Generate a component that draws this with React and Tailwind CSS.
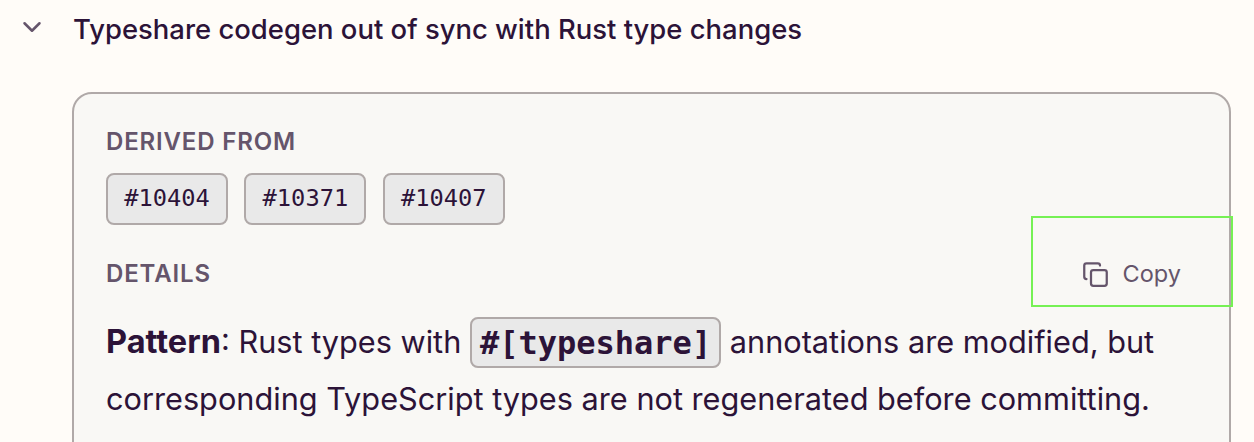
import { ChevronDown, Copy } from 'lucide-react'

const prs = ['#10404', '#10371', '#10407']

const App = () => {
  return (
    <div className="relative h-[442px] w-[1254px] overflow-hidden bg-[#fffcf8] font-['Inter',sans-serif] text-[#2c1338]">
      <div className="flex h-[58px] items-center">
        <ChevronDown className="ml-[17px] h-[30px] w-[30px] -translate-y-[2px] text-[#65556b]" strokeWidth={2} />
        <h2 className="ml-[26px] text-[27.45px] leading-[58px] font-medium">
          Typeshare codegen out of sync with Rust type changes
        </h2>
      </div>

      <div className="mt-[34px] ml-[72px] h-[400px] w-[1159px] rounded-t-[20px] border-2 border-[#b0a9a8] bg-[#f9f8f5] px-[32px] pt-[34px]">
        <div className="text-[24px] leading-[28px] font-semibold tracking-[0.85px] text-[#65556b]">DERIVED FROM</div>
        <div className="mt-[17px] flex gap-[16.4px]">
          {prs.map((pr) => (
            <span
              key={pr}
              className="flex h-[52px] w-[122px] items-center justify-center rounded-[8px] border-2 border-[#b0a9a8] bg-[#e9e9e9] font-['DejaVu_Sans_Mono',monospace] text-[23.7px]"
            >
              {pr}
            </span>
          ))}
        </div>

        <div className="mt-[35px] flex h-[28px] items-center justify-between">
          <div className="text-[24px] leading-[28px] font-semibold tracking-[0.85px] text-[#65556b]">DETAILS</div>
          <button className="mr-[16px] flex items-center gap-[14px] text-[23.5px] text-[#65556b]">
            <Copy className="h-[27px] w-[27px]" strokeWidth={2} />
            Copy
          </button>
        </div>

        <p className="mt-[25px] text-[30.7px] leading-[57px]">
          <strong className="text-[32.5px] font-bold">Pattern</strong>: Rust types with{' '}
          <code className="rounded-[8px] border-2 border-[#b0a9a8] bg-[#e9e9e9] px-[8px] py-[4.5px] font-['DejaVu_Sans_Mono',monospace] text-[32px] leading-[40px] font-bold">
            #[typeshare]
          </code>{' '}
          annotations are modified, but corresponding TypeScript types are not regenerated before committing.
        </p>
      </div>

      {/* selection box drawn over the copy button */}
      <div className="absolute top-[216px] left-[1031px] h-[91px] w-[202px] border-2 border-[#76f154]" />
    </div>
  )
}

export default App
